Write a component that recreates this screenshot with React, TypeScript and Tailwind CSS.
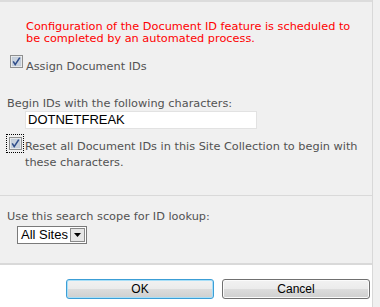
import React from "react";

const CheckBox = ({ focused = false }: { focused?: boolean }) => (
  <div
    className={
      focused
        ? "w-[18px] h-[19px] shrink-0 flex items-center justify-center border border-dotted border-black"
        : "w-[18px] h-[19px] shrink-0 flex items-center justify-center"
    }
  >
    <svg width="13" height="13" viewBox="0 0 13 13">
      <rect x="0.5" y="0.5" width="12" height="12" fill="#f4f4f4" stroke="#8e8f8f" />
      <rect x="2" y="2" width="9" height="9" fill="#c9d2de" stroke="#b7c2d0" strokeWidth="0.5" />
      <path d="M3.2 6.4 L5.2 9.6 L9.8 2.6" fill="none" stroke="#2f4d8a" strokeWidth="1.6" />
    </svg>
  </div>
);

const WinButton = ({ label, focused = false }: { label: string; focused?: boolean }) => (
  <button
    className={
      focused
        ? "w-[148px] h-[20px] rounded-[3px] border border-[#3c9ed6] shadow-[inset_0_0_0_1px_#a8dff8] bg-[linear-gradient(#f2f2f2_0%,#ebebeb_50%,#dddddd_50%,#cfcfcf_100%)] text-[12px] text-black font-['Liberation_Sans',Arial,sans-serif] leading-none"
        : "w-[148px] h-[20px] rounded-[3px] border border-[#707070] shadow-[inset_0_0_0_1px_#fbfbfb] bg-[linear-gradient(#f2f2f2_0%,#ebebeb_50%,#dddddd_50%,#cfcfcf_100%)] text-[12px] text-black font-['Liberation_Sans',Arial,sans-serif] leading-none"
    }
  >
    {label}
  </button>
);

export default function App() {
  return (
    <div className="w-[380px] h-[307px] flex bg-[#f0f0f0] overflow-hidden font-['DejaVu_Sans',Verdana,sans-serif] text-[11.3px] text-[#525252]">
      <div className="w-[372px] flex flex-col">
        <div className="h-[195px] border-t-2 border-[#dcdcdc] pl-[7px]">
          <p className="mt-[19px] pl-[19px] text-[#ff0000] leading-[12px] pr-[10px]">
            Configuration of the Document ID feature is scheduled to be completed by an automated process.
          </p>
          <div className="mt-[7px] flex">
            <CheckBox />
            <span className="mt-[7px] ml-[1px]">Assign Document IDs</span>
          </div>
          <div className="mt-[21px] leading-[13px]">Begin IDs with the following characters:</div>
          <input
            readOnly
            value="DOTNETFREAK"
            className="mt-[1px] ml-[18px] w-[232px] h-[18px] bg-white border border-[#e2e2e2] px-[2px] text-[13px] text-black font-['Liberation_Sans',Arial,sans-serif] outline-none"
          />
          <div className="mt-[4px] flex -ml-[1px]">
            <CheckBox focused />
            <span className="mt-[5px] ml-[1px] leading-[16px] pr-[8px]">
              Reset all Document IDs in this Site Collection to begin with these characters.
            </span>
          </div>
        </div>
        <div className="h-[68px] border-t border-[#d9d9d9] pl-[7px]">
          <div className="mt-[14px] leading-[14px]">Use this search scope for ID lookup:</div>
          <div className="mt-[2px] ml-[10px] w-[70px] h-[18px] bg-white border border-[#7a7a7a] flex items-center justify-between pl-[3px] pr-[1px] text-[13px] text-black font-['Liberation_Sans',Arial,sans-serif]">
            <span>All Sites</span>
            <span className="w-[15px] h-[14px] border border-[#8a8a8a] bg-[#e6e6e6] flex items-center justify-center">
              <svg width="7" height="4" viewBox="0 0 7 4">
                <path d="M0 0 H7 L3.5 4 Z" fill="#000" />
              </svg>
            </span>
          </div>
        </div>
        <div className="flex-1 border-t-2 border-[#d9d9d9] bg-white flex justify-end gap-[8px] pr-[2px] pt-[14px]">
          <WinButton label="OK" focused />
          <WinButton label="Cancel" />
        </div>
      </div>
      <div className="w-px bg-[#d8d8d8]" />
    </div>
  );
}
